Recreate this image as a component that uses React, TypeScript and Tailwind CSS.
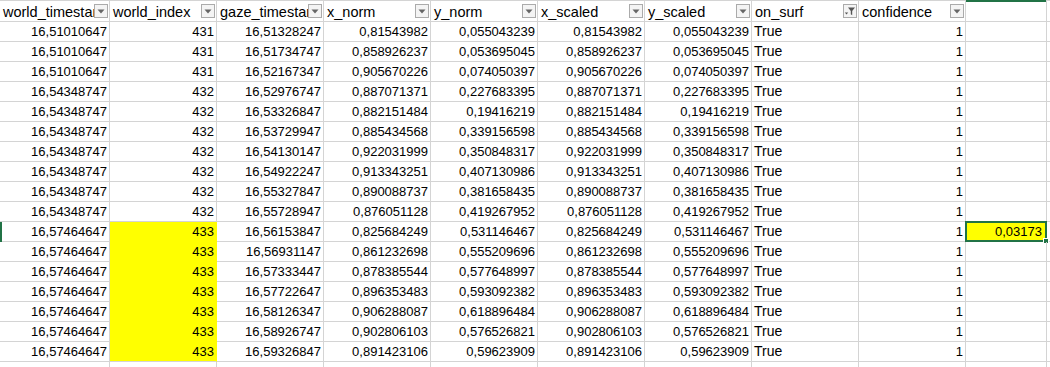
import { FC } from 'react';

const headers = [
  'world_timestamp',
  'world_index',
  'gaze_timestamp',
  'x_norm',
  'y_norm',
  'x_scaled',
  'y_scaled',
  'on_surf',
  'confidence',
];

// world_timestamp, world_index, gaze_timestamp, x_norm, y_norm
const rows: [string, string, string, string, string][] = [
  ['16,51010647', '431', '16,51328247', '0,81543982', '0,055043239'],
  ['16,51010647', '431', '16,51734747', '0,858926237', '0,053695045'],
  ['16,51010647', '431', '16,52167347', '0,905670226', '0,074050397'],
  ['16,54348747', '432', '16,52976747', '0,887071371', '0,227683395'],
  ['16,54348747', '432', '16,53326847', '0,882151484', '0,19416219'],
  ['16,54348747', '432', '16,53729947', '0,885434568', '0,339156598'],
  ['16,54348747', '432', '16,54130147', '0,922031999', '0,350848317'],
  ['16,54348747', '432', '16,54922247', '0,913343251', '0,407130986'],
  ['16,54348747', '432', '16,55327847', '0,890088737', '0,381658435'],
  ['16,54348747', '432', '16,55728947', '0,876051128', '0,419267952'],
  ['16,57464647', '433', '16,56153847', '0,825684249', '0,531146467'],
  ['16,57464647', '433', '16,56931147', '0,861232698', '0,555209696'],
  ['16,57464647', '433', '16,57333447', '0,878385544', '0,577648997'],
  ['16,57464647', '433', '16,57722647', '0,896353483', '0,593092382'],
  ['16,57464647', '433', '16,58126347', '0,906288087', '0,618896484'],
  ['16,57464647', '433', '16,58926747', '0,902806103', '0,576526821'],
  ['16,57464647', '433', '16,59326847', '0,891423106', '0,59623909'],
];

const cols = 'grid grid-cols-[110px_107px_107px_107px_107px_107px_107px_107px_107px_81px_1fr]';

const DropButton: FC<{ filtered?: boolean }> = ({ filtered }) => (
  <span className="mr-[1px] mt-[3px] flex h-[14px] w-[14px] shrink-0 items-center justify-center border border-[#ababab] bg-[#f4f4f4]">
    {filtered ? (
      <svg width="12" height="12" viewBox="0 0 12 12">
        <path d="M4 2.5h7l-2.8 3.6v4.2l-1.4-1v-3.2z" fill="#555" />
        <path d="M0.8 7.5h3.4l-1.7 2z" fill="#555" />
      </svg>
    ) : (
      <svg width="8" height="5" viewBox="0 0 8 5">
        <path d="M0.5 0.5h7l-3.5 4z" fill="#666" />
      </svg>
    )}
  </span>
);

const NumCell: FC<{ value?: string; yellow?: boolean; lastYellow?: boolean }> = ({ value, yellow, lastYellow }) => (
  <div
    className={
      'h-[20px] overflow-hidden whitespace-nowrap border-r border-b pr-[2px] text-right text-[13px] leading-[19px] ' +
      (yellow
        ? lastYellow
          ? 'border-r-[#ffff00] border-b-[#d4d4d4] bg-[#ffff00]'
          : 'border-[#ffff00] bg-[#ffff00]'
        : 'border-[#d4d4d4]')
    }
  >
    {value}
  </div>
);

export default function App() {
  return (
    <div
      className="relative h-[367px] w-[1050px] overflow-hidden bg-white text-black"
      style={{ fontFamily: '"Liberation Sans", Arial, sans-serif' }}
    >
      {/* header row */}
      <div className={cols + ' border-t border-[#d4d4d4]'}>
        {headers.map((h) => (
          <div key={h} className="flex h-[21px] items-start border-r border-b border-[#d4d4d4]">
            <span className="flex-1 overflow-hidden whitespace-nowrap pl-[3px] pt-[3px] text-[14.5px] leading-[16px]">
              {h}
            </span>
            <DropButton filtered={h === 'on_surf'} />
          </div>
        ))}
        <div className="relative h-[21px] border-r border-b border-[#d4d4d4]">
          <div className="absolute -top-[1px] left-0 right-0 h-[2px] bg-[#217346]" />
        </div>
        <div className="h-[21px] border-b border-[#d4d4d4]" />
      </div>

      {/* data rows */}
      {rows.map((r, i) => {
        const yellow = i >= 10;
        const selected = i === 10;
        return (
          <div key={i} className={cols + ' relative'}>
            {selected && <div className="absolute left-0 top-0 h-[20px] w-[2px] bg-[#217346]" />}
            <NumCell value={r[0]} />
            <NumCell value={r[1]} yellow={yellow} lastYellow={i === rows.length - 1} />
            <NumCell value={r[2]} />
            <NumCell value={r[3]} />
            <NumCell value={r[4]} />
            <NumCell value={r[3]} />
            <NumCell value={r[4]} />
            <div className="h-[20px] border-r border-b border-[#d4d4d4] pl-[2px] text-[14px] leading-[19px]">True</div>
            <NumCell value="1" />
            {selected ? (
              <div className="relative h-[20px] border-r border-b border-[#d4d4d4] bg-[#ffff00] pr-[4px] text-right text-[13px] leading-[19px]">
                0,03173
                <div className="absolute -left-[1px] -top-[1px] -right-[1px] -bottom-[1px] border-2 border-[#217346]" />
                <div className="absolute -bottom-[3px] -right-[3px] h-[6px] w-[6px] border border-white bg-[#217346]" />
              </div>
            ) : (
              <NumCell />
            )}
            <div className="h-[20px] border-b border-[#d4d4d4]" />
          </div>
        );
      })}

      {/* partial next row */}
      <div className={cols}>
        {Array.from({ length: 10 }).map((_, i) => (
          <div key={i} className="h-[20px] border-r border-[#d4d4d4]" />
        ))}
        <div className="h-[20px]" />
      </div>
    </div>
  );
}
